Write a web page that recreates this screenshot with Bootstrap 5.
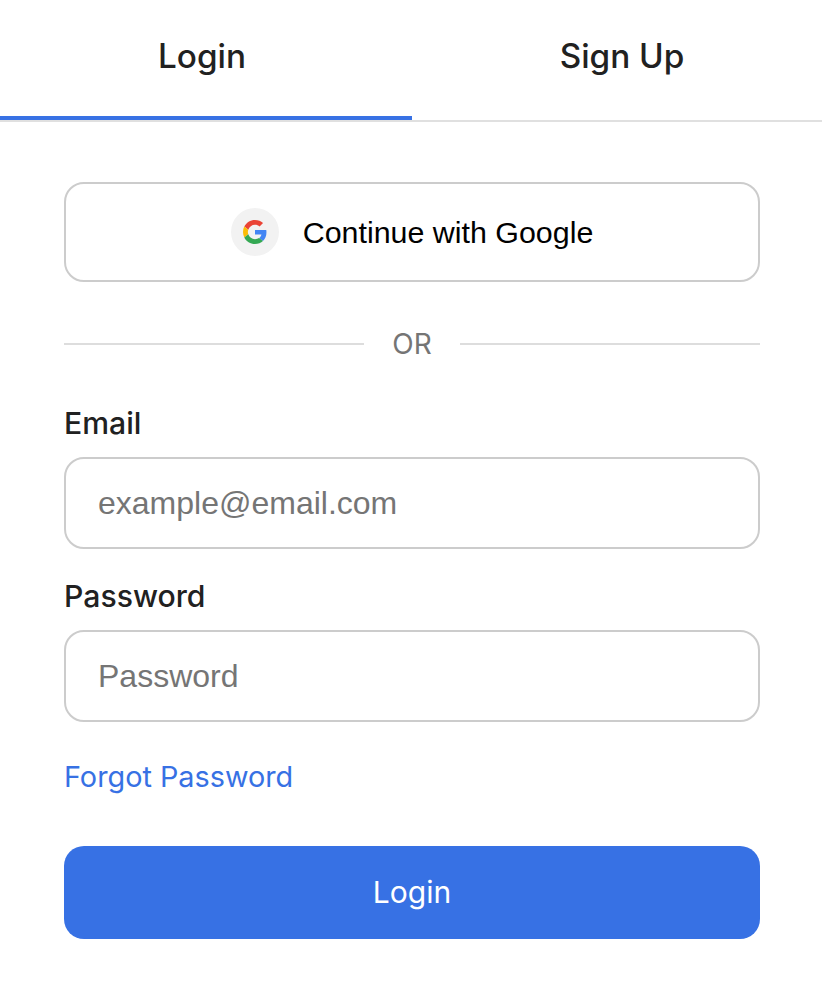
<!DOCTYPE html>
<html lang="en"><head><meta charset="utf-8">
<link href="https://cdn.jsdelivr.net/npm/bootstrap@5.3.0/dist/css/bootstrap.min.css" rel="stylesheet">
<style>
body{font-family:Inter,"Liberation Sans",sans-serif;background:#fff;color:#212121;margin:0}
.tabbar{height:122px;border-bottom:2px solid #e0e0e0}
.tabitem{font-size:33.3px;font-weight:500;color:#212121;background:none;border:0;height:120px;margin:0}
.tabitem.on{flex:0 0 412px;border-bottom:4px solid #3771e4;padding:0 8px 2px 0}
.tabitem.off{flex:0 0 410px;padding:0 0 6px 10px}
.authbody{padding:60px 62px 0 64px}
.gbtn{height:100px;border:2px solid #ccc;border-radius:20px;background:#fff;font-family:"Liberation Sans",sans-serif;font-size:30.4px;color:#000;gap:24px}
.gtext{padding-top:2px}
.gcirc{width:48px;height:48px;border-radius:50%;background:#f2f2f2}
.orline{margin-top:52px;height:20px;gap:28px;color:#757575;font-size:28px}
.orline hr{flex:1;margin:0;border:0;border-top:2px solid #ddd;opacity:1}
.flabel{font-size:30.2px;font-weight:500;color:#212121;margin:0 0 16px;line-height:36px}
.finput{height:92px;border:2px solid #ccc;border-radius:20px;padding:0 32px;font-family:"Liberation Sans",sans-serif;font-size:32px;color:#212121;box-shadow:none}
.finput::placeholder{color:#757575;opacity:1}
.grpone{margin-top:51px}
.grptwo{margin-top:29px}
.forgotrow{margin-top:37px}
.forgot{font-size:28.8px;color:#3771e4;text-decoration:none;line-height:36px}
.mainrow{margin-top:51px}
.mainbtn{height:93px;background:#3771e4;border:0;border-radius:20px;color:#fff;font-size:30px;font-weight:400;width:100%}
</style></head><body>
<div class="d-flex tabbar">
<button class="tabitem on" type="button">Login</button>
<button class="tabitem off" type="button">Sign Up</button>
</div>
<div class="authbody">
<button class="gbtn w-100 d-flex align-items-center justify-content-center" type="button">
<span class="gcirc d-flex align-items-center justify-content-center">
<svg width="24" height="24" viewBox="0 0 48 48"><path fill="#EA4335" d="M24 9.5c3.5 0 6.7 1.2 9.2 3.6l6.9-6.9C35.9 2.4 30.5 0 24 0 14.6 0 6.5 5.4 2.6 13.2l8 6.2C12.5 13.6 17.8 9.5 24 9.5z"/><path fill="#4285F4" d="M46.9 24.5c0-1.6-.1-3.100-.4-4.500H24v9h12.900c-.6 3-2.200 5.500-4.700 7.200l7.700 6c4.500-4.200 7-10.300 7-17.700z"/><path fill="#FBBC05" d="M10.500 28.600c-.5-1.400-.8-3-.8-4.600s.3-3.200.8-4.600l-8-6.200C.9 16.500 0 20.100 0 24s.9 7.500 2.600 10.800l7.900-6.200z"/><path fill="#34A853" d="M24 48c6.500 0 11.900-2.100 15.900-5.800l-7.700-6c-2.200 1.500-4.900 2.300-8.200 2.300-6.200 0-11.500-4.100-13.400-9.900l-8 6.200C6.500 42.600 14.600 48 24 48z"/></svg>
</span>
<span class="gtext">Continue with Google</span>
</button>
<div class="orline d-flex align-items-center"><hr><span>OR</span><hr></div>
<div class="grpone">
<label class="flabel d-block" for="em">Email</label>
<input id="em" class="finput form-control" type="email" placeholder="example@email.com">
</div>
<div class="grptwo">
<label class="flabel d-block" for="pw">Password</label>
<input id="pw" class="finput form-control" type="password" placeholder="Password">
</div>
<div class="forgotrow d-flex"><a class="forgot" href="#">Forgot Password</a></div>
<div class="mainrow"><button class="mainbtn btn" type="button">Login</button></div>
</div>
<script src="https://cdn.jsdelivr.net/npm/bootstrap@5.3.0/dist/js/bootstrap.bundle.min.js"></script>
</body></html>
